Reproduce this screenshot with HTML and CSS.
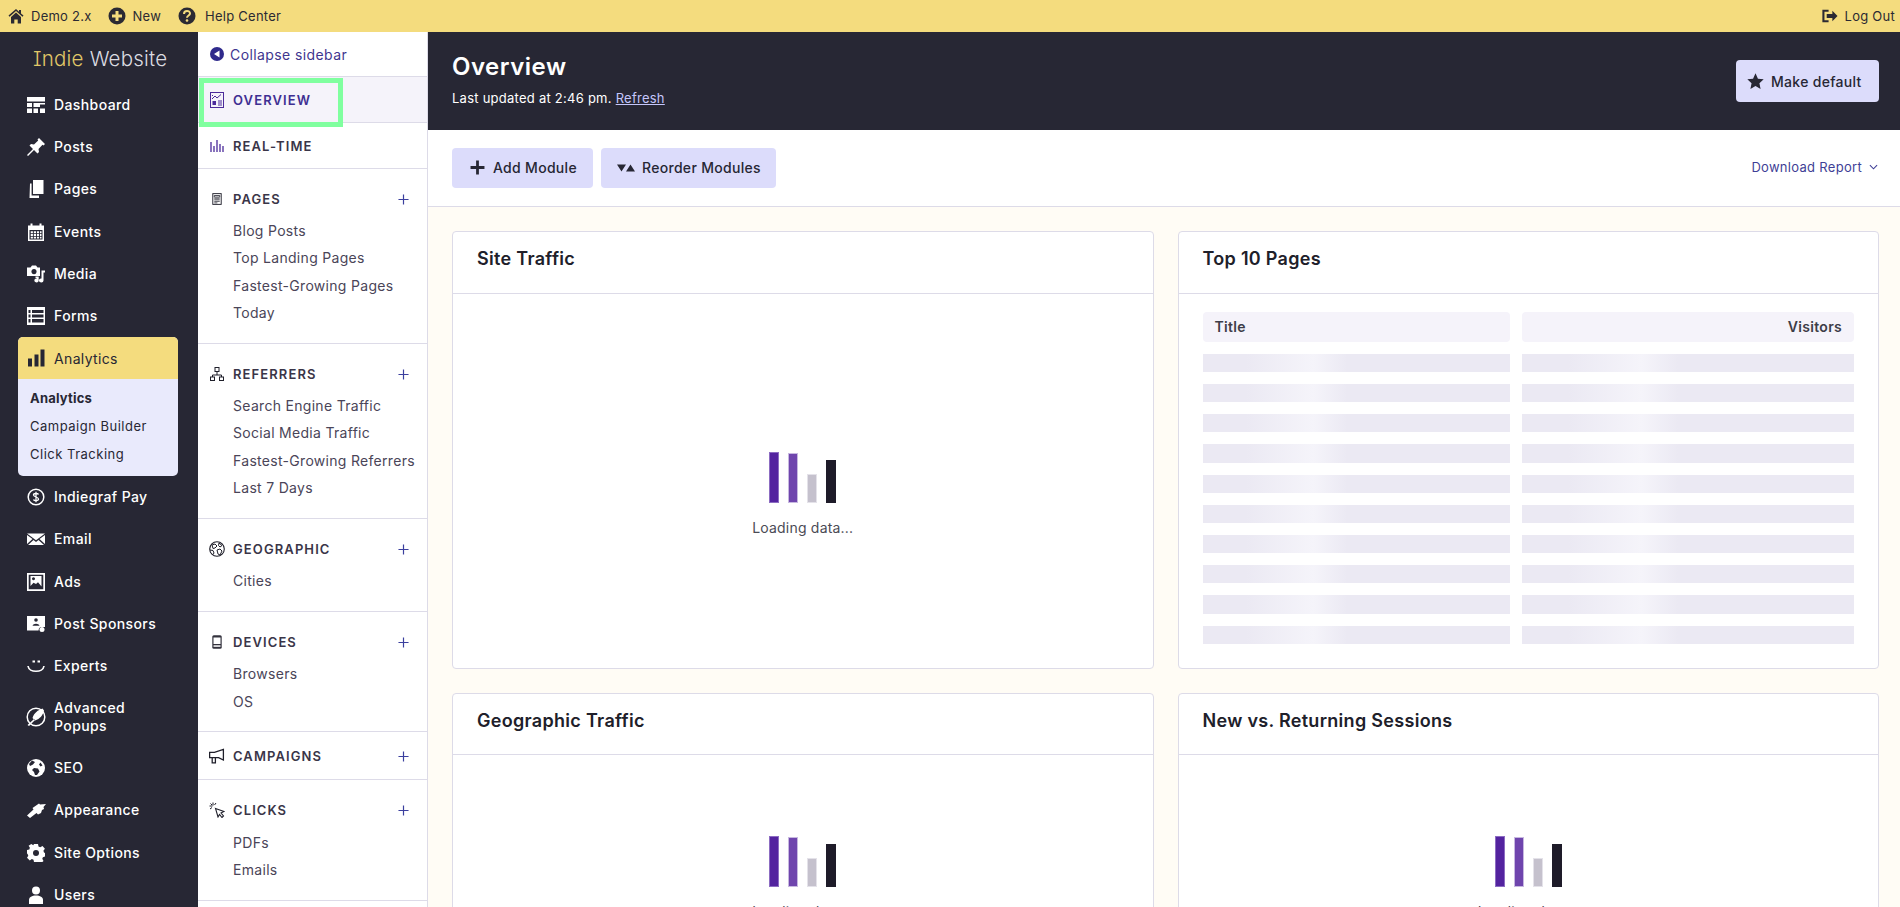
FILE: index.html
```html
<!DOCTYPE html>
<html lang="en">
<head>
<meta charset="utf-8">
<title>Overview</title>
<link rel="stylesheet" href="styles.css">
</head>
<body>
<header class="topbar">
  <a class="top-link top-home"><svg class="top-ico" viewBox="0 0 16 16"><path d="M8 1 .5 7.600l1 1.100L8 3l6.500 5.700 1-1.100-2.500-2.200V2h-2v1.800z"/><path d="M3 9 8 4.600 13 9v6.500H9.700v-4H6.300v4H3z"/></svg>Demo 2.x</a>
  <a class="top-link top-new"><svg class="top-ico" viewBox="0 0 18 18"><circle cx="9" cy="9" r="8.500"/><path d="M9 4v10M4 9h10" stroke="#f4dc7e" stroke-width="3"/></svg>New</a>
  <a class="top-link top-help"><svg class="top-ico" viewBox="0 0 18 18"><circle cx="9" cy="9" r="8.500"/><path d="M6 7c0-4 6-4 6-.500 0 2-3 2-3 4.300" fill="none" stroke="#f4dc7e" stroke-width="2"/><circle cx="9" cy="13.500" r="1.300" fill="#f4dc7e"/></svg>Help Center</a>
  <a class="top-link top-logout"><svg class="top-ico" viewBox="0 0 17 14"><path d="M7 1.500H1.500v11H7" fill="none" stroke="#2b2a33" stroke-width="2.200"/><path d="M5 5h6V1.500L16.500 7 11 12.500V9H5z"/></svg>Log Out</a>
</header>

<div class="shell">
  <nav class="nav">
    <div class="logo"><span class="logo-a">Indie</span> <span class="logo-b">Website</span></div>

    <a class="nav-item"><svg class="nav-ico" viewBox="0 0 18 16"><path d="M0 0h18v4.500H0zM0 6h5v4H0zM6.500 6H18v1.500h-5V10H6.500zM0 11.500h5V16H0zM6.500 11.500H11V16H6.500zM13 11.500h5V16h-5z"/></svg>Dashboard</a>
    <a class="nav-item"><svg class="nav-ico" viewBox="0 0 18 18"><path d="M12 0l6 6-1.500 1.500-1-.7-4 4.200.5 3-1.500 1.500L7 12l-6 6-1-1 6-6-3.500-3.500L4 6l3 .5 4.200-4-.7-1z"/></svg>Posts</a>
    <a class="nav-item"><svg class="nav-ico" viewBox="0 0 18 18"><path d="M6 0h10.500v14H6z"/><path d="M3 3.500h1.600v12H12V18H2.500z"/></svg>Pages</a>
    <a class="nav-item"><svg class="nav-ico" viewBox="0 0 18 18"><path d="M1 2.500h2.500V.5h2v2h7V.5h2v2H17V18H1zM2.500 7v9.500h13V7z" fill-rule="evenodd"/><path d="M3.700 8.200h2.200v2H3.700zM6.800 8.200H9v2H6.800zM9.900 8.200h2.200v2H9.900zM13 8.200h1.500v2H13zM3.700 11h2.200v2H3.700zM6.800 11H9v2H6.800zM9.900 11h2.200v2H9.900zM13 11h1.500v2H13zM3.700 13.800h2.200v1.800H3.700zM6.800 13.800H9v1.800H6.800zM9.900 13.800h2.200v1.800H9.900zM13 13.800h1.500v1.800H13z"/></svg>Events</a>
    <a class="nav-item"><svg class="nav-ico" viewBox="0 0 18 18"><path d="M3.500 2.500 5 .5h4l1.500 2H13v8.500H0V2.500zM7 4a2.600 2.600 0 1 0 .01 0z" fill-rule="evenodd"/><path d="M14.500 5.500H18v2h-1.500v8a2.300 2 0 1 1-2-2zM8.500 11.500h3.200v4a2.200 2 0 1 1-2-2v-.5H8.500z"/></svg>Media</a>
    <a class="nav-item"><svg class="nav-ico" viewBox="0 0 18 18"><path d="M0 0h18v18H0zM1.500 3v3h2V3zM5 3v3h11.500V3zM1.500 7.500v3h2v-3zM5 7.500v3h11.500v-3zM1.500 12v3.500h2V12zM5 12v3.500h11.500V12z" fill-rule="evenodd"/></svg>Forms</a>

    <div class="nav-open">
      <a class="nav-head"><svg class="nav-ico" viewBox="0 0 18 17"><path d="M1 9h4v8H1zM7.500 5h4v12h-4zM13.500 0h4v17h-4z" fill="#272734"/></svg>Analytics</a>
      <div class="nav-sub">
        <a class="sub-item sub-current">Analytics</a>
        <a class="sub-item">Campaign Builder</a>
        <a class="sub-item">Click Tracking</a>
      </div>
    </div>

    <a class="nav-item"><svg class="nav-ico" viewBox="0 0 18 18"><circle cx="9" cy="9" r="7.800" fill="none" stroke="#fff" stroke-width="1.500"/><path d="M11.500 6.500C11 5.200 6.500 5 6.500 7s5 2 5 4-4.500 2-5 .5M9 3.800v10.400" fill="none" stroke="#fff" stroke-width="1.300"/></svg>Indiegraf Pay</a>
    <a class="nav-item"><svg class="nav-ico" viewBox="0 0 18 14"><path d="M0 1.500h18L9 8.200z"/><path d="M0 3v9l5.500-5zM18 3v9l-5.500-5zM1 13h16L11.500 8 9 10 6.500 8z"/></svg>Email</a>
    <a class="nav-item"><svg class="nav-ico" viewBox="0 0 18 18"><path d="M0 0h18v18H0zM1.700 1.700v14.600h14.600V1.700z" fill-rule="evenodd"/><path d="M3.500 3h11v10.500L11 9.300 9 11 6.500 9.800 3.500 13zM6.500 4.200a1.500 1.500 0 1 0 .01 0z" fill-rule="evenodd"/></svg>Ads</a>
    <a class="nav-item"><svg class="nav-ico" viewBox="0 0 18 16"><path d="M0 0h18v11h-4.500a4 4 0 0 0-2 3.500H0z"/><circle cx="9" cy="4" r="1.800" fill="#272734"/><path d="M5.500 9.800C6 7 12 7 12.500 9.800z" fill="#272734"/><circle cx="15" cy="13.500" r="2.500"/></svg>Post Sponsors</a>
    <a class="nav-item"><svg class="nav-ico" viewBox="0 0 18 14"><path d="M1 7c1 7 15 7 16 0" fill="none" stroke="#fff" stroke-width="1.700"/><path d="M5.500 1.500h2.500v2H5.500zM10.500 1.500H13v2h-2.500z"/></svg>Experts</a>
    <a class="nav-item nav-tall"><svg class="nav-ico nav-ico-big" viewBox="0 0 20 20"><circle cx="10" cy="10" r="8.800" fill="none" stroke="#fff" stroke-width="1.500"/><path d="M16.500 1.500C12 3 8 6 6.500 11L9 13.500C14 12 17 8 18 3.500zM1.500 18 8 12l1 1-6 6z"/></svg><span class="nav-wrap">Advanced Popups</span></a>
    <a class="nav-item"><svg class="nav-ico" viewBox="0 0 18 18"><circle cx="9" cy="9" r="9"/><path d="M5 1.500 8 3 6 5.500 3 7 2 5zM7 9l4 .5 1.500 3L10 16H8L7 13 5 11zM13.500 3.500l2 3-2 1-1.500-2z" fill="#272734"/></svg>SEO</a>
    <a class="nav-item"><svg class="nav-ico nav-ico-wide" viewBox="0 0 19 16"><path d="M0 13.500l6.500-6L5.500 6 12 1.500l1 1L19 2l-2.500 3 .5 2-2 1-1 3-3 1.500L9.500 11 3 16z"/></svg>Appearance</a>
    <a class="nav-item"><svg class="nav-ico" viewBox="0 0 18 18"><path d="M7 0h4l.5 2.500 1.700.8 2.300-1.300 2.400 2.800-1.500 2 .6 1.700 1 .5v3.500l-2.100.7-.6 1.500 1.200 2.300-2.700 2.400-2-1.300-1.800.7L11 18H7l-.5-2.200-1.700-.7-2 1.300L0 13.800l1.300-2-.7-1.700L0 9.500V6l2.300-.6.6-1.700L1.600 1.800 4.300 0l2 1.200z"/><circle cx="9" cy="9" r="3" fill="#272734"/></svg>Site Options</a>
    <a class="nav-item"><svg class="nav-ico" viewBox="0 0 18 18"><circle cx="9" cy="4.500" r="4"/><path d="M2 18v-4c0-3 3-4.500 7-4.500s7 1.500 7 4.500v4z"/></svg>Users</a>
  </nav>

  <aside class="side">
    <a class="collapse"><svg class="collapse-ico" viewBox="0 0 14 14"><circle cx="7" cy="7" r="7"/><path d="M9.500 3.500v7L4 7z" fill="#fff"/></svg>Collapse sidebar</a>
    <div class="tab tab-current">
      <svg class="side-ico" viewBox="0 0 14 16"><rect x=".5" y=".5" width="13" height="15" fill="none" stroke="#4b2a9a"/><path d="M2 7l3-3 2 2 4-3.500M2 3.500h1M8 9h4M8 11h4M8 13h4" fill="none" stroke="#4b2a9a"/><rect x="2.500" y="9" width="3.500" height="4" fill="#4b2a9a"/></svg>
      <span class="tab-text">OVERVIEW</span>
      <span class="focus-ring"></span>
    </div>
    <div class="tab">
      <svg class="side-ico" viewBox="0 -1 14 16"><path d="M1 3v10M4 7v6M7 1v12M10 5v8M13 7v6" stroke="#4b2a9a" stroke-width="1.300" fill="none"/></svg>
      <span class="tab-text">REAL-TIME</span>
    </div>

    <section class="group">
      <div class="group-head"><svg class="side-ico" viewBox="-3 -1.300 18 17.600"><rect x=".6" y=".6" width="10.800" height="13.800" fill="none" stroke="#1f1f2a" stroke-width="1.200"/><path d="M2.500 3h7v2h-7zM2.500 6.500h7M2.500 8.500h7M2.500 10.500h7M2.500 12.500h4" stroke="#1f1f2a" fill="none"/></svg><span class="group-title">PAGES</span><svg class="plus" viewBox="0 0 12 12"><path d="M6 .5v11M.5 6h11"/></svg></div>
      <a class="group-item">Blog Posts</a><a class="group-item">Top Landing Pages</a><a class="group-item">Fastest-Growing Pages</a><a class="group-item">Today</a>
    </section>
    <section class="group">
      <div class="group-head"><svg class="side-ico" viewBox="0 -1 14 16"><rect x="5" y=".5" width="4" height="4" fill="none" stroke="#1f1f2a"/><path d="M7 4.500V8M2.500 10V8h9v2" fill="none" stroke="#1f1f2a"/><rect x=".5" y="10" width="4" height="3.500" fill="none" stroke="#1f1f2a"/><rect x="9.500" y="10" width="4" height="3.500" fill="none" stroke="#1f1f2a"/></svg><span class="group-title">REFERRERS</span><svg class="plus" viewBox="0 0 12 12"><path d="M6 .5v11M.5 6h11"/></svg></div>
      <a class="group-item">Search Engine Traffic</a><a class="group-item">Social Media Traffic</a><a class="group-item">Fastest-Growing Referrers</a><a class="group-item">Last 7 Days</a>
    </section>
    <section class="group">
      <div class="group-head"><svg class="side-ico side-ico-big" viewBox="0 0 16 16"><circle cx="8" cy="8" r="7.300" fill="none" stroke="#1f1f2a" stroke-width="1.100"/><path d="M3 4l3-1 2 2-2 2-2 .5zM8 9l3-1 2 2-2 4-2-1zM10 2l3 2.500-2 1.500-1.500-1.500zM1 9l3 .5 1 2.500-1 1.500" fill="none" stroke="#1f1f2a"/></svg><span class="group-title">GEOGRAPHIC</span><svg class="plus" viewBox="0 0 12 12"><path d="M6 .5v11M.5 6h11"/></svg></div>
      <a class="group-item">Cities</a>
    </section>
    <section class="group">
      <div class="group-head"><svg class="side-ico" viewBox="-2 -1 14 16"><rect x=".3" y=".3" width="9.400" height="13.400" rx="1.500" fill="#33323d"/><rect x="1.500" y="2.500" width="7" height="6.500" fill="#fff"/><rect x="1.500" y="10.300" width="7" height="1.500" fill="#fff"/></svg><span class="group-title">DEVICES</span><svg class="plus" viewBox="0 0 12 12"><path d="M6 .5v11M.5 6h11"/></svg></div>
      <a class="group-item">Browsers</a><a class="group-item">OS</a>
    </section>
    <section class="group group-single">
      <div class="group-head"><svg class="side-ico side-ico-big" viewBox="0 0 15 14"><path d="M.6 3.500h4.500L13.500.8v10L9 8.500H.6zM3 8.500v5h3v-5M13.500 1v10" fill="none" stroke="#1f1f2a" stroke-width="1.200"/></svg><span class="group-title">CAMPAIGNS</span><svg class="plus" viewBox="0 0 12 12"><path d="M6 .5v11M.5 6h11"/></svg></div>
    </section>
    <section class="group">
      <div class="group-head"><svg class="side-ico side-ico-big" viewBox="0 0 16 16"><path d="M6.500 6.500l8.500 3-3 1.500 2.500 3-1.500 1.500-2.500-3-1.500 2.500z" fill="none" stroke="#1f1f2a" stroke-width="1.100"/><path d="M4 .5v3M.5 4h3M1.500 1.500l1.500 1.500M7 1l-1.500 2M1 7l2-1.500" stroke="#1f1f2a" fill="none"/></svg><span class="group-title">CLICKS</span><svg class="plus" viewBox="0 0 12 12"><path d="M6 .5v11M.5 6h11"/></svg></div>
      <a class="group-item">PDFs</a><a class="group-item">Emails</a>
    </section>
  </aside>

  <main class="main">
    <div class="hero">
      <div class="hero-text">
        <h1 class="hero-title">Overview</h1>
        <p class="hero-sub">Last updated at 2:46 pm. <a class="hero-link">Refresh</a></p>
      </div>
      <a class="btn btn-default"><svg class="btn-star" viewBox="0 0 16 16"><path d="M8 .3l2.300 5 5.400.6-4 3.700 1.100 5.400L8 12.300 3.200 15l1.100-5.400-4-3.700 5.400-.6z"/></svg>Make default</a>
    </div>
    <div class="toolbar">
      <a class="btn btn-add"><svg class="btn-plus" viewBox="0 0 14 14"><path d="M7 .5v13M.5 7h13"/></svg>Add Module</a>
      <a class="btn btn-reorder"><svg class="btn-tri" viewBox="0 0 18 8"><path d="M0 .5h9L4.500 7.500zM9 7.500h9L13.500 .5z"/></svg>Reorder Modules</a>
      <a class="download">Download Report<svg class="chev" viewBox="0 0 10 6"><path d="M1 1l4 4 4-4"/></svg></a>
    </div>
    <div class="cards">
      <article class="card">
        <h2 class="card-title">Site Traffic</h2>
        <div class="card-body loader-tall">
          <div class="bars"><i class="bar bar-a"></i><i class="bar bar-b"></i><i class="bar bar-c"></i><i class="bar bar-d"></i></div>
          <p class="loading">Loading data...</p>
        </div>
      </article>
      <article class="card">
        <h2 class="card-title">Top 10 Pages</h2>
        <div class="card-body table">
          <div class="th">Title</div><div class="th th-right">Visitors</div>
          <i class="sk"></i><i class="sk"></i>
          <i class="sk"></i><i class="sk"></i>
          <i class="sk"></i><i class="sk"></i>
          <i class="sk"></i><i class="sk"></i>
          <i class="sk"></i><i class="sk"></i>
          <i class="sk"></i><i class="sk"></i>
          <i class="sk"></i><i class="sk"></i>
          <i class="sk"></i><i class="sk"></i>
          <i class="sk"></i><i class="sk"></i>
          <i class="sk"></i><i class="sk"></i>
        </div>
      </article>
      <article class="card">
        <h2 class="card-title">Geographic Traffic</h2>
        <div class="card-body loader-short">
          <div class="bars"><i class="bar bar-a"></i><i class="bar bar-b"></i><i class="bar bar-c"></i><i class="bar bar-d"></i></div>
          <p class="loading">Loading data...</p>
        </div>
      </article>
      <article class="card">
        <h2 class="card-title">New vs. Returning Sessions</h2>
        <div class="card-body loader-short">
          <div class="bars"><i class="bar bar-a"></i><i class="bar bar-b"></i><i class="bar bar-c"></i><i class="bar bar-d"></i></div>
          <p class="loading">Loading data...</p>
        </div>
      </article>
    </div>
  </main>
</div>
</body>
</html>
```

FILE: styles.css
```css
* { box-sizing: border-box; }
html, body { margin: 0; height: 100%; }
body {
  display: flex;
  flex-direction: column;
  height: 907px;
  overflow: hidden;
  font-family: Inter, "Noto Sans", "Liberation Sans", sans-serif;
  color: #272734;
  background: #fff;
}
a { color: inherit; text-decoration: none; }
svg { display: block; flex: none; }

/* top bar */
.topbar {
  flex: none;
  height: 32px;
  display: flex;
  align-items: center;
  background: #f4dc7e;
  padding-left: 8px;
  padding-right: 5px;
  font-size: 13px;
  letter-spacing: .25px;
  color: #2b2a33;
}
.top-link { display: flex; align-items: center; white-space: nowrap; }
.top-ico { fill: #2b2a33; }
.top-home .top-ico { width: 16px; height: 16px; margin-right: 7px; }
.top-new { margin-left: 16px; }
.top-new .top-ico { width: 18px; height: 18px; margin-right: 7px; }
.top-help { margin-left: 17px; }
.top-help .top-ico { width: 18px; height: 18px; margin-right: 9px; }
.top-logout { margin-left: auto; }
.top-logout .top-ico { width: 16px; height: 14px; margin-right: 7px; }

.shell { flex: 1; min-height: 0; display: flex; }

/* main nav */
.nav {
  flex: none;
  width: 198px;
  background: #272734;
  color: #fff;
  overflow: hidden;
}
.logo {
  height: 52px;
  padding: 12px 0 0 33px;
  font-size: 20.500px;
  line-height: 30px;
  font-weight: 300;
  letter-spacing: .2px;
  white-space: nowrap;
  font-feature-settings: "ss02";
}
.logo-a { color: #e2c868; }
.logo-b { color: #dcdce2; }
.nav-item {
  display: flex;
  align-items: center;
  height: 42.200px;
  padding-left: 27px;
  font-size: 14px;
  font-weight: 500;
  letter-spacing: .4px;
  line-height: 18px;
}
.nav-ico { width: 18px; height: 18px; margin-right: 9px; fill: #fff; }
.nav-ico-big { width: 20px; height: 20px; margin: 0 8px 0 -1px; }
.nav-ico-wide { width: 19px; margin-right: 8px; }
.nav-tall { height: 60px; }
.nav-wrap { width: 90px; }
.nav-open {
  margin: 0 18px;
  width: 160px;
  border-radius: 5px;
  overflow: hidden;
  background: #e9eafc;
  color: #272734;
}
.nav-head {
  display: flex;
  align-items: center;
  height: 42px;
  padding-left: 9px;
  background: #f4dc7e;
  font-size: 14px;
  letter-spacing: .35px;
}
.nav-sub { padding: 5px 0 8px; }
.sub-item {
  display: flex;
  align-items: center;
  height: 28px;
  padding-left: 12px;
  font-size: 13px;
  letter-spacing: .5px;
}
.sub-current { font-weight: 700; letter-spacing: .2px; }

/* secondary sidebar */
.side {
  flex: none;
  width: 230px;
  border-right: 1px solid #dddbe8;
  overflow: hidden;
  color: #4a4558;
}
.collapse {
  display: flex;
  align-items: center;
  height: 45px;
  padding-left: 12px;
  border-bottom: 1px solid #dddbe8;
  font-size: 14px;
  letter-spacing: .4px;
  color: #3f368f;
}
.collapse-ico { width: 14px; height: 14px; margin-right: 6px; fill: #2f2a8c; }
.tab {
  position: relative;
  display: flex;
  align-items: center;
  height: 46px;
  padding-left: 12px;
  border-bottom: 1px solid #dddbe8;
}
.tab-current { background: #f5f3fa; }
.tab-text {
  font-size: 13px;
  font-weight: 600;
  letter-spacing: 1.100px;
  color: #3a3548;
}
.tab-current .tab-text { color: #3f2f92; }
.focus-ring {
  position: absolute;
  left: 1px;
  top: 1px;
  width: 144px;
  height: 49px;
  border: 5px solid #80ff9f;
}
.side-ico { width: 14px; height: 16px; margin-right: 9px; }
.side-ico-big { width: 16px; height: 16px; margin: 0 8px 0 -1px; }
.group {
  padding: 18px 0 16.700px;
  border-bottom: 1px solid #dddbe8;
}
.group-head {
  display: flex;
  align-items: center;
  height: 24px;
  margin-bottom: 6px;
  padding-left: 12px;
}
.group-title {
  flex: 1;
  font-size: 13px;
  font-weight: 600;
  letter-spacing: 1.100px;
  color: #3a3548;
}
.plus {
  width: 11px;
  height: 11px;
  margin-right: 18px;
  fill: none;
  stroke: #3b3f9e;
  stroke-width: 1.300;
}
.group-item {
  display: flex;
  align-items: center;
  height: 27.330px;
  padding-left: 35px;
  font-size: 14px;
  letter-spacing: .3px;
  white-space: nowrap;
}
.group-single {
  height: 48px;
  padding: 12px 0 0;
}
.group-single .group-head { margin: 0; }

/* main */
.main {
  flex: 1;
  min-width: 0;
  display: flex;
  flex-direction: column;
  background: #fffcf5;
}
.hero {
  flex: none;
  height: 98px;
  display: flex;
  align-items: center;
  justify-content: space-between;
  padding: 0 21px 0 24px;
  background: #272734;
  color: #fff;
}
.hero-text { margin-bottom: 4px; }
.hero-title { margin: 0; font-size: 24px; line-height: 32px; font-weight: 600; letter-spacing: .5px; }
.hero-sub { margin: 5px 0 0; font-size: 13px; line-height: 20px; letter-spacing: .25px; }
.hero-link { color: #c5c6fb; text-decoration: underline; }
.btn {
  display: flex;
  align-items: center;
  background: #dcdcfb;
  border-radius: 4px;
  font-size: 14px;
  font-weight: 500;
  letter-spacing: .3px;
  color: #272734;
  white-space: nowrap;
}
.btn-default { width: 143px; height: 42px; padding-left: 11px; }
.btn-star { width: 17px; height: 17px; margin-right: 7px; fill: #272734; }
.toolbar {
  flex: none;
  height: 77px;
  display: flex;
  align-items: center;
  padding: 0 21px 1px 24px;
  background: #fff;
  border-bottom: 1px solid #dddbe8;
}
.btn-add { width: 141px; height: 40px; padding-left: 18px; }
.btn-plus { width: 15px; height: 15px; margin-right: 8px; fill: none; stroke: #272734; stroke-width: 2.600; }
.btn-reorder { width: 175px; height: 40px; margin-left: 8px; padding-left: 16px; }
.btn-tri { width: 18px; height: 8px; margin-right: 7px; fill: #272734; }
.download {
  display: flex;
  align-items: center;
  margin-left: auto;
  margin-bottom: 2px;
  padding-right: 1px;
  font-size: 13px;
  letter-spacing: .3px;
  color: #3f3f96;
}
.chev { width: 9px; height: 6px; margin-left: 7px; fill: none; stroke: #3f3f96; stroke-width: 1.200; }

.cards {
  flex: 1;
  min-height: 0;
  display: grid;
  grid-template-columns: 1fr 1fr;
  grid-auto-rows: 437.600px;
  gap: 24px;
  padding: 24.450px 21px 0 24px;
}
.card {
  display: flex;
  flex-direction: column;
  background: #fff;
  border: 1px solid #dddbe8;
  border-radius: 4px;
}
.card-title {
  flex: none;
  height: 61.400px;
  margin: 0;
  padding-left: 24px;
  border-bottom: 1px solid #dddbe8;
  font-size: 18px;
  line-height: 54px;
  font-weight: 600;
  letter-spacing: .3px;
  color: #20202a;
}
.card-body { flex: 1; min-height: 0; }
.loader-tall { padding-top: 158px; }
.loader-short { padding-top: 80.500px; }
.bars {
  display: flex;
  justify-content: center;
  align-items: flex-end;
  gap: 9px;
  height: 51px;
}
.bar { display: block; width: 10px; }
.bar-a { height: 51px; background: #53239f; border: 1px solid #8c6cc2; }
.bar-b { height: 50px; background: #6f45ad; border: 1px solid #c7b8e0; }
.bar-c { height: 29px; background: #c5c1cd; border: 1px solid #e4e2e9; }
.bar-d { height: 43px; background: #1e1b29; }
.loading {
  margin: 15px 0 0;
  text-align: center;
  font-size: 14px;
  line-height: 20px;
  letter-spacing: .2px;
  color: #4b4b55;
}
.table {
  display: grid;
  grid-template-columns: 307fr 332fr;
  grid-auto-rows: 18.200px;
  grid-template-rows: 30px;
  gap: 12px;
  align-content: start;
  padding: 18px 24px 0;
}
.th {
  display: flex;
  align-items: center;
  padding: 0 12px;
  background: #f5f3fa;
  border-radius: 4px;
  font-size: 14px;
  font-weight: 600;
  letter-spacing: .3px;
  color: #3d3d48;
}
.th-right { justify-content: flex-end; }
.sk {
  display: block;
  background: linear-gradient(90deg, #ebe9f3 14%, #f5f4fa 36%, #ebe9f3 47%);
}
```
